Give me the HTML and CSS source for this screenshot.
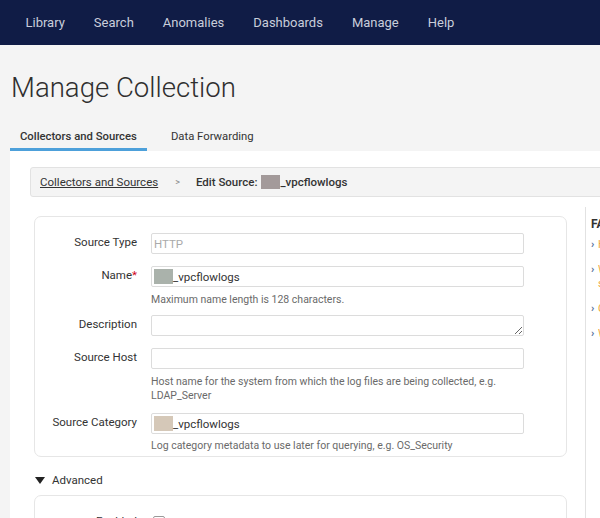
FILE: index.html
```html
<!DOCTYPE html>
<html>
<head>
<meta charset="utf-8">
<link rel="stylesheet" href="styles.css">
</head>
<body>
<header class="topnav">
  <a class="nav-item">Library</a>
  <a class="nav-item">Search</a>
  <a class="nav-item">Anomalies</a>
  <a class="nav-item">Dashboards</a>
  <a class="nav-item">Manage</a>
  <a class="nav-item">Help</a>
</header>
<main class="page">
  <h1 class="title">Manage Collection</h1>
  <nav class="tabs">
    <a class="tab tab-active">Collectors and Sources</a>
    <a class="tab">Data Forwarding</a>
  </nav>
  <section class="panel">
    <div class="crumbs">
      <a class="crumb-link">Collectors and Sources</a>
      <span class="crumb-sep">&gt;</span>
      <span class="crumb-current">Edit Source: <span class="redact redact-brown"></span>_vpcflowlogs</span>
    </div>
    <div class="panel-body">
      <div class="main-col">
        <div class="card">
          <div class="field">
            <label class="label">Source Type</label>
            <div class="control">
              <div class="input input-disabled">HTTP</div>
            </div>
          </div>
          <div class="field field-help">
            <label class="label">Name<span class="req">*</span></label>
            <div class="control">
              <div class="input"><span class="redact redact-green"></span>_vpcflowlogs</div>
              <div class="help">Maximum name length is 128 characters.</div>
            </div>
          </div>
          <div class="field">
            <label class="label">Description</label>
            <div class="control">
              <textarea class="textarea"></textarea>
            </div>
          </div>
          <div class="field field-help-2">
            <label class="label">Source Host</label>
            <div class="control">
              <div class="input"></div>
              <div class="help">Host name for the system from which the log files are being collected, e.g. LDAP_Server</div>
            </div>
          </div>
          <div class="field field-last">
            <label class="label">Source Category</label>
            <div class="control">
              <div class="input"><span class="redact redact-tan"></span>_vpcflowlogs</div>
              <div class="help">Log category metadata to use later for querying, e.g. OS_Security</div>
            </div>
          </div>
        </div>
        <div class="advanced">
          <svg class="caret" width="10" height="7" viewBox="0 0 10 7"><path d="M0 0 L10 0 L5 7 Z" fill="#222"/></svg>
          <span>Advanced</span>
        </div>
        <div class="card card-adv">
          <div class="field">
            <label class="label">Enabled</label>
            <div class="control">
              <span class="checkbox"></span>
            </div>
          </div>
        </div>
      </div>
      <aside class="faq">
        <div class="faq-title">FAQ</div>
        <ul class="faq-list">
          <li class="faq-item"><span class="chev">›</span><span class="faq-link">How do I send data?</span></li>
          <li class="faq-item"><span class="chev">›</span><span class="faq-link">What source category<br>should I use?</span></li>
          <li class="faq-item"><span class="chev">›</span><span class="faq-link">Can I use multiple endpoints?</span></li>
          <li class="faq-item"><span class="chev">›</span><span class="faq-link">What are the limits?</span></li>
        </ul>
      </aside>
    </div>
  </section>
</main>
</body>
</html>
```

FILE: styles.css
```css
html, body {
  margin: 0;
  padding: 0;
  overflow: hidden;
}
body {
  font-family: Roboto, "Liberation Sans", sans-serif;
  background: #f4f4f4;
  color: #333;
  width: 600px;
  height: 518px;
}
.topnav {
  height: 45px;
  background: #101c46;
  display: flex;
  align-items: center;
  padding-left: 11px;
}
.nav-item {
  color: #c9cedb;
  font-size: 13px;
  padding: 0 14.5px;
  line-height: 45px;
}
.page {
  display: block;
}
.title {
  margin: 27px 0 0 11px;
  font-size: 27.6px;
  font-weight: 300;
  line-height: 32px;
  color: #2f2f2f;
}
.tabs {
  display: flex;
  margin: 20px 0 0 10px;
  gap: 14px;
}
.tab {
  font-size: 11.3px;
  font-weight: 500;
  color: #333;
  padding: 6px 10px 4px;
  line-height: 14px;
  border-bottom: 3px solid transparent;
}
.tab-active {
  border-bottom-color: #4da0da;
}
.tab + .tab {
  font-weight: 400;
}
.panel {
  background: #fff;
  margin-left: 10px;
  width: 700px;
  height: 400px;
  padding: 16px 0 0 20px;
  box-sizing: border-box;
}
.crumbs {
  width: 640px;
  height: 30px;
  box-sizing: border-box;
  background: #f4f4f4;
  border: 1px solid #e2e2e2;
  border-radius: 3px;
  display: flex;
  align-items: center;
  padding-left: 9px;
  font-size: 11.5px;
}
.crumb-link {
  color: #333;
  text-decoration: underline;
}
.crumb-sep {
  color: #888;
  font-size: 9px;
  margin: 0 16px 0 17px;
}
.crumb-current {
  font-weight: 500;
  color: #333;
  display: flex;
  align-items: center;
}
.redact {
  display: inline-block;
  height: 15px;
  width: 19px;
}
.crumb-current .redact {
  margin-left: 4px;
  width: 19px;
  height: 14px;
}
.redact-brown { background: #a39a9a; }
.redact-green { background: #aab2ab; }
.redact-tan { background: #d5c8b8; }
.panel-body {
  display: flex;
  margin-top: 10px;
}
.main-col {
  flex: none;
  margin-left: 4px;
  padding-top: 9px;
  width: 533px;
}
.card {
  border: 1px solid #e6e6e6;
  border-radius: 7px;
  background: #fff;
  padding: 16px 0 3px;
}
.field {
  display: grid;
  grid-template-columns: 102px 373px;
  column-gap: 14px;
  margin-bottom: 12px;
}
.field-help {
  margin-bottom: 8px;
}
.field-help-2 {
  margin-bottom: 10px;
}
.field-last {
  margin-bottom: 0;
}
.label {
  text-align: right;
  font-size: 11.5px;
  line-height: 19px;
  color: #333;
}
.req {
  color: #d0021b;
}
.input {
  height: 21px;
  box-sizing: border-box;
  border: 1px solid #dcdcdc;
  border-radius: 2px;
  padding-left: 2px;
  font-size: 11.5px;
  color: #333;
  display: flex;
  align-items: center;
}
.input-disabled {
  color: #aaa;
}
.textarea {
  display: block;
  width: 373px;
  height: 21px;
  box-sizing: border-box;
  border: 1px solid #dcdcdc;
  border-radius: 2px;
  margin: 0;
  padding: 0;
  resize: vertical;
}
.help {
  margin-top: 6px;
  font-size: 10.5px;
  line-height: 14px;
  color: #6a6a6a;
}
.field-last .help {
  margin-top: 5px;
}
.advanced {
  margin-top: 16px;
  display: flex;
  align-items: center;
  font-size: 11.5px;
  line-height: 14px;
  color: #333;
}
.caret {
  margin: 0 7px 0 1px;
}
.card-adv {
  margin-top: 8px;
  height: 60px;
}
.checkbox {
  display: inline-block;
  width: 10px;
  height: 10px;
  border: 1px solid #999;
  border-radius: 2px;
  margin: 4px 0 0 2px;
}
.faq {
  flex: none;
  margin-left: 18px;
  border-left: 1px solid #e2e2e2;
  padding: 10px 0 0 5px;
  width: 200px;
  height: 330px;
}
.faq-title {
  font-size: 12px;
  font-weight: 700;
  color: #333;
  line-height: 14px;
}
.faq-list {
  list-style: none;
  margin: 7px 0 0;
  padding: 0;
}
.faq-item {
  display: flex;
  font-size: 11px;
  line-height: 14px;
  margin-bottom: 11px;
}
.chev {
  color: #55709a;
  width: 7px;
  flex: none;
  font-weight: 700;
}
.faq-link {
  color: #f2a93b;
  white-space: nowrap;
}
```
